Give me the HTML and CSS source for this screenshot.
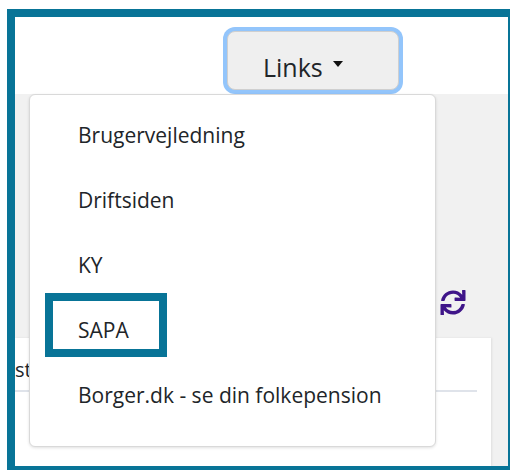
FILE: index.html
```html
<!DOCTYPE html>
<html lang="da">
<head>
<meta charset="utf-8">
<title>Links</title>
<link rel="stylesheet" href="styles.css">
</head>
<body>
<div class="frame">
  <header class="topbar">
    <button class="links-btn" type="button">Links <span class="caret"></span></button>
  </header>
  <main class="main">
    <div class="toolbar">
      <svg class="sync" viewBox="0 0 512 512" aria-hidden="true"><path d="M440.65 12.57l4 82.77A247.16 247.16 0 0 0 255.83 8C134.73 8 33.910 94.92 12.29 209.82A12 12 0 0 0 24.09 224h49.05a12 12 0 0 0 11.67-9.26 175.91 175.91 0 0 1 317-56.94l-101.46-4.86a12 12 0 0 0-12.57 12v47.41a12 12 0 0 0 12 12H500a12 12 0 0 0 12-12V12a12 12 0 0 0-12-12h-47.37a12 12 0 0 0-11.98 12.57zM255.83 432a175.61 175.61 0 0 1-146-77.8l101.8 4.87a12 12 0 0 0 12.57-12v-47.4a12 12 0 0 0-12-12H12a12 12 0 0 0-12 12V500a12 12 0 0 0 12 12h47.35a12 12 0 0 0 12-12.6l-4.15-82.57A247.17 247.17 0 0 0 255.83 504c121.11 0 221.930-86.92 243.55-201.82a12 12 0 0 0-11.8-14.18h-49.05a12 12 0 0 0-11.67 9.26A175.86 175.86 0 0 1 255.83 432z"/></svg>
    </div>
    <section class="card">
      <div class="card-head">stamdata</div>
    </section>
  </main>
  <nav class="menu">
    <a class="menu-item" href="#">Brugervejledning</a>
    <a class="menu-item" href="#">Driftsiden</a>
    <a class="menu-item" href="#">KY</a>
    <a class="menu-item" href="#">SAPA</a>
    <a class="menu-item" href="#">Borger.dk - se din folkepension</a>
  </nav>
  <div class="marker"></div>
</div>
</body>
</html>
```

FILE: styles.css
```css
html, body {
  margin: 0;
  padding: 0;
  background: #ffffff;
  overflow: hidden;
  font-family: "Open Sans", "Noto Sans", sans-serif;
  color: #212529;
}

/* outer frame, running off the right and bottom edges */
.frame {
  box-sizing: border-box;
  position: relative;
  margin: 9px 0 0 7px;
  width: 503px;
  height: 461px;
  border-style: solid;
  border-color: #087497;
  border-width: 8px 2px 4px 8px;
  overflow: hidden;
  display: flex;
  flex-direction: column;
  background: #ffffff;
}

.topbar {
  height: 77px;
  flex: none;
  padding: 14px 0 0 212px;
  box-sizing: border-box;
  background: #ffffff;
}

.links-btn {
  box-sizing: border-box;
  width: 172px;
  height: 59px;
  padding: 12px 0 0 35px;
  display: flex;
  align-items: center;
  gap: 10px;
  background: #efefef;
  border: 1px solid #cfcfcf;
  border-radius: 8px;
  box-shadow: 0 0 0 4px #93c5fb;
  font-family: "Open Sans", sans-serif;
  font-size: 25px;
  color: #212529;
}

.caret {
  width: 0;
  height: 0;
  border-left: 5.5px solid transparent;
  border-right: 5.5px solid transparent;
  border-top: 6px solid #111;
  margin-top: -5px;
}

.main {
  flex: 1;
  background: #f1f1f1;
  display: flex;
  flex-direction: column;
}

.toolbar {
  display: flex;
  justify-content: flex-end;
  padding: 196px 42px 0 0;
  height: 25px;
}

.sync {
  width: 26px;
  height: 25px;
  fill: #3f1589;
}

.card {
  margin: 23px 17px 0 0;
  flex: 1;
  background: #ffffff;
  box-shadow: 1px 0 2px rgba(0, 0, 0, 0.08);
}

.card-head {
  margin: 0 14px 0 0;
  padding: 20px 0 0 0;
  height: 32px;
  border-bottom: 2px solid #dfe3ea;
  font-size: 20px;
  line-height: 24px;
}

.menu {
  position: absolute;
  left: 14px;
  top: 77px;
  box-sizing: border-box;
  width: 407px;
  height: 353px;
  padding: 7px 0 0;
  background: #ffffff;
  border: 1px solid #d9d9d9;
  border-radius: 6px;
  box-shadow: 0 1px 3px rgba(0, 0, 0, 0.12);
  display: flex;
  flex-direction: column;
}

.menu-item {
  height: 65px;
  display: flex;
  align-items: center;
  padding-left: 48px;
  font-size: 21px;
  color: #212529;
  text-decoration: none;
}

/* highlight ring around the SAPA entry */
.marker {
  position: absolute;
  left: 30px;
  top: 276px;
  width: 106px;
  height: 48px;
  border: 8px solid #087497;
}
```
